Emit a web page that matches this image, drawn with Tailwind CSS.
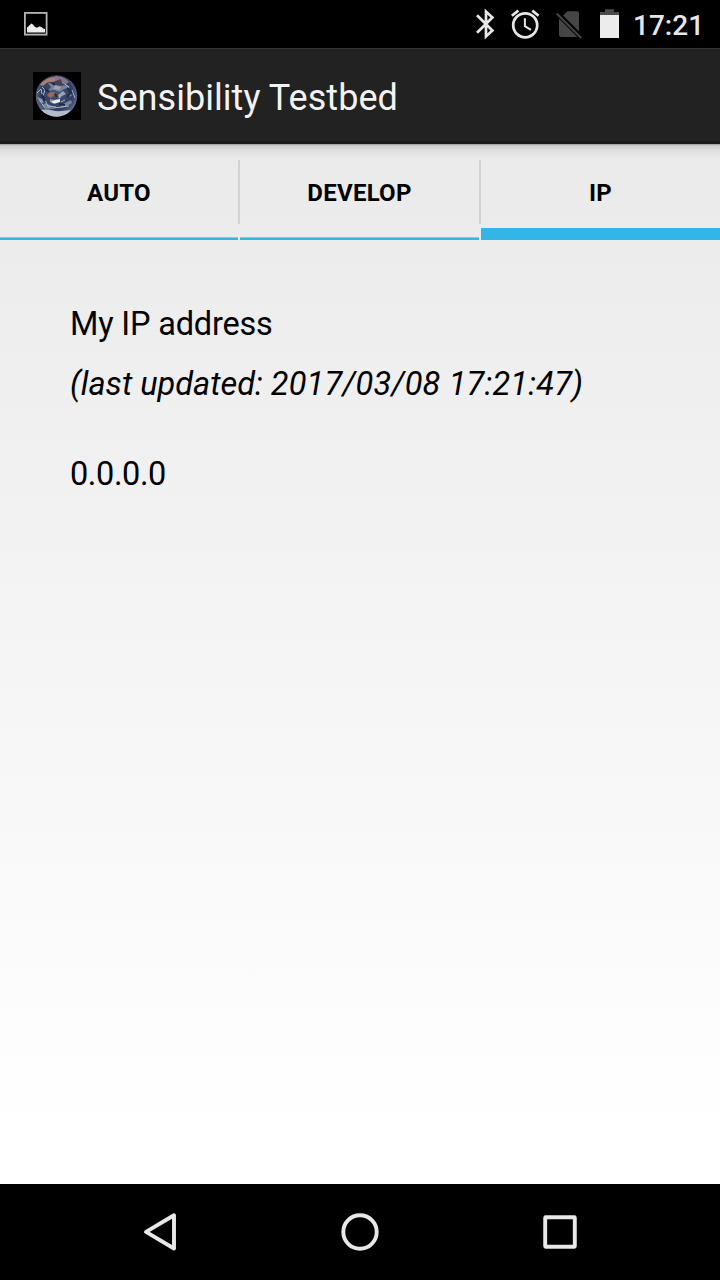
<!DOCTYPE html>
<html lang="en">
<head>
<meta charset="utf-8">
<title>Sensibility Testbed</title>
<script src="https://cdn.jsdelivr.net/npm/@tailwindcss/browser@4"></script>
</head>
<body class="w-[720px] h-[1280px] overflow-hidden bg-black font-['Roboto',sans-serif]">
<div class="flex flex-col w-[720px] h-[1280px]">
  <!-- status bar -->
  <header class="flex h-12 shrink-0 items-center justify-between bg-black pl-5 pr-[17px]">
    <svg class="w-8 h-12" viewBox="20 0 32 48" fill="none">
      <rect x="24.9" y="12.9" width="21.7" height="21.7" stroke="#b4b4b4" stroke-width="1.8"/>
      <path d="M27 32.5V27.5Q28.500 26.800 29.500 25.200L31.500 23.500L33 24.600Q34 26.800 36 27.600H37.500Q39.500 25.700 41.500 27.100Q43 28.900 45 29V32.500Z" fill="#ececec"/>
    </svg>
    <div class="flex items-center">
      <svg class="w-[160px] h-12" viewBox="470 0 160 48" fill="none">
        <path d="M477 15.200L492.400 30.500L486 36.400V11.600L492.400 17.500L477 32.800" stroke="#e6e6e6" stroke-width="2.700"/>
        <circle cx="525.200" cy="25.300" r="12" stroke="#e6e6e6" stroke-width="2.700"/>
        <path d="M524.900 18.200V26.200L531 29.800" stroke="#e6e6e6" stroke-width="2"/>
        <path d="M511.800 15.800L518.300 10.600M532.300 10.600L538.600 15.800" stroke="#e6e6e6" stroke-width="2.700"/>
        <path d="M559 18.600V34.500Q559 37 561.500 37H577.400Z" fill="#454545"/>
        <path d="M563 15.400L567.500 11.200H577Q579 11.200 579 13.200V31.400Z" fill="#454545"/>
        <path d="M556.700 13.500L581.200 38" stroke="#454545" stroke-width="2"/>
        <path d="M600 15V12H605V9.300H614V12H619V15Z" fill="#4b4b4b"/>
        <rect x="600" y="15" width="19" height="23" fill="#ececec"/>
      </svg>
      <span class="w-[73px] pl-[3px] text-[28px] leading-[46px] font-medium text-[#e6e6e6] whitespace-nowrap pt-[4px]">17:21</span>
    </div>
  </header>

  <!-- action bar -->
  <div class="flex h-24 shrink-0 items-center gap-4 border-t border-t-[#333] border-b-3 border-b-[#191919] bg-[#222] pl-[33px] pt-[2px]">
    <svg class="size-12" viewBox="0 0 48 48">
      <defs>
        <radialGradient id="globe" cx=".5" cy=".45" r=".55">
          <stop offset="0" stop-color="#465373"/><stop offset=".7" stop-color="#303d60"/><stop offset="1" stop-color="#66738f"/>
        </radialGradient>
        <clipPath id="disc"><circle cx="23.500" cy="24" r="20.700"/></clipPath>
        <filter id="soft"><feGaussianBlur stdDeviation=".6"/></filter>
      </defs>
      <rect width="48" height="48" fill="#000"/>
      <circle cx="23.500" cy="24" r="20.700" fill="url(#globe)"/>
      <g clip-path="url(#disc)" filter="url(#soft)">
        <path d="M7 13Q13 5 22 5L25 8L20 10L15 10L10 14Z" fill="#a87e73"/>
        <path d="M22 4Q31 4 36 10L33 12L27 8L22 8Z" fill="#82788a"/>
        <path d="M25 8L28 7L27 13L24 14Z" fill="#553f49"/>
        <path d="M17 20L22 20L21 24L17 26L14 23Z" fill="#9a6756"/>
        <path d="M14 10Q20 13 27 14L34 13L37 16L31 17L27 20L21 18L15 19L18 15Z" fill="#76829a"/>
        <path d="M22 13L28 15L26 18L20 17ZM30 19L33 22L29 24L26 27L25 23Z" fill="#9ca4b4"/>
        <path d="M17 27L21 28L25 27L24 30L21 32L17 30ZM4 25L9 27L11 31L7 30Z" fill="#8f97a9"/>
        <path d="M21 28.500L27 27V30L22 31.500L18 30Z" fill="#f2ece6"/>
        <path d="M12 31L19 34L16 36L9 34ZM30 32L38 28L39 31L34 34L27 36ZM35 21L39 23L37 25Z" fill="#7a87a2"/>
        <path d="M8 38Q15 37 20 38.500T38 38L32 44L23 46L13 43Z" fill="#b3bbca"/>
        <path d="M4 21L8 17L9 22M9 15L12 18L10 24M29 10L36 15M39 18L42 26M12 28L15 34L23 35M28 30L32 28M7 29L12 36L20 36L29 35L36 34" fill="none" stroke="#aab4c8" stroke-width="1"/>
        <path d="M12 17L16 20M34 16L38 20L34 25M9 23L12 29M26 32L32 33M22 22L24 25M19 11L22 13" fill="none" stroke="#1d2a4e" stroke-width="2"/>
      </g>
    </svg>
    <h1 class="text-[36px] leading-[48px] font-normal text-[#f3f3f3] whitespace-nowrap pt-[4px] tracking-[0.05px]">Sensibility Testbed</h1>
  </div>

  <!-- page body -->
  <main class="flex flex-1 flex-col bg-linear-to-b from-[#eaeaea] to-white to-95% text-black">
    <nav class="flex h-24 shrink-0 bg-[linear-gradient(to_bottom,rgba(0,0,0,.34)_0,rgba(0,0,0,.12)_2px,rgba(0,0,0,.045)_7px,transparent_16px)] text-[24px] leading-[98px] font-bold text-center tracking-[0.25px]">
      <div class="flex w-[238px] flex-col"><span class="h-[93px]">AUTO</span><span class="h-[3px] border-t border-[#8bc9e2] bg-[#33b5e5]"></span></div>
      <div class="mt-4 h-16 w-[2px] bg-[#d2d2d2]"></div>
      <div class="flex w-[239px] flex-col"><span class="h-[93px]">DEVELOP</span><span class="h-[3px] border-t border-[#8bc9e2] bg-[#33b5e5]"></span></div>
      <div class="mt-4 h-16 w-[2px] bg-[#d2d2d2]"></div>
      <div class="flex w-[239px] flex-col"><span class="h-[84px]">IP</span><span class="h-3 bg-[#33b5e5]"></span></div>
    </nav>
    <section class="flex flex-col px-[70px] pt-[54px] text-[32.500px] leading-[60px]">
      <p class="tracking-[-0.18px]">My IP address</p>
      <p class="italic tracking-[0.2px]"><span class="tracking-[0px]">(last updated: </span>2017/03/08 17:21:47)</p>
      <p class="mt-[30px] tracking-[-0.4px]">0.0.0.0</p>
    </section>
  </main>

  <!-- navigation bar -->
  <footer class="h-24 shrink-0 bg-black">
    <svg class="h-24 w-full" viewBox="0 0 720 96" fill="none" stroke="#e8e8e8" stroke-width="3.900" stroke-linejoin="round">
      <path d="M174 31.300V64.500L146 47.900Z"/>
      <circle cx="360" cy="48" r="16.700"/>
      <rect x="545.200" y="33.200" width="29.600" height="29.600" rx=".5"/>
    </svg>
  </footer>
</div>
</body>
</html>
